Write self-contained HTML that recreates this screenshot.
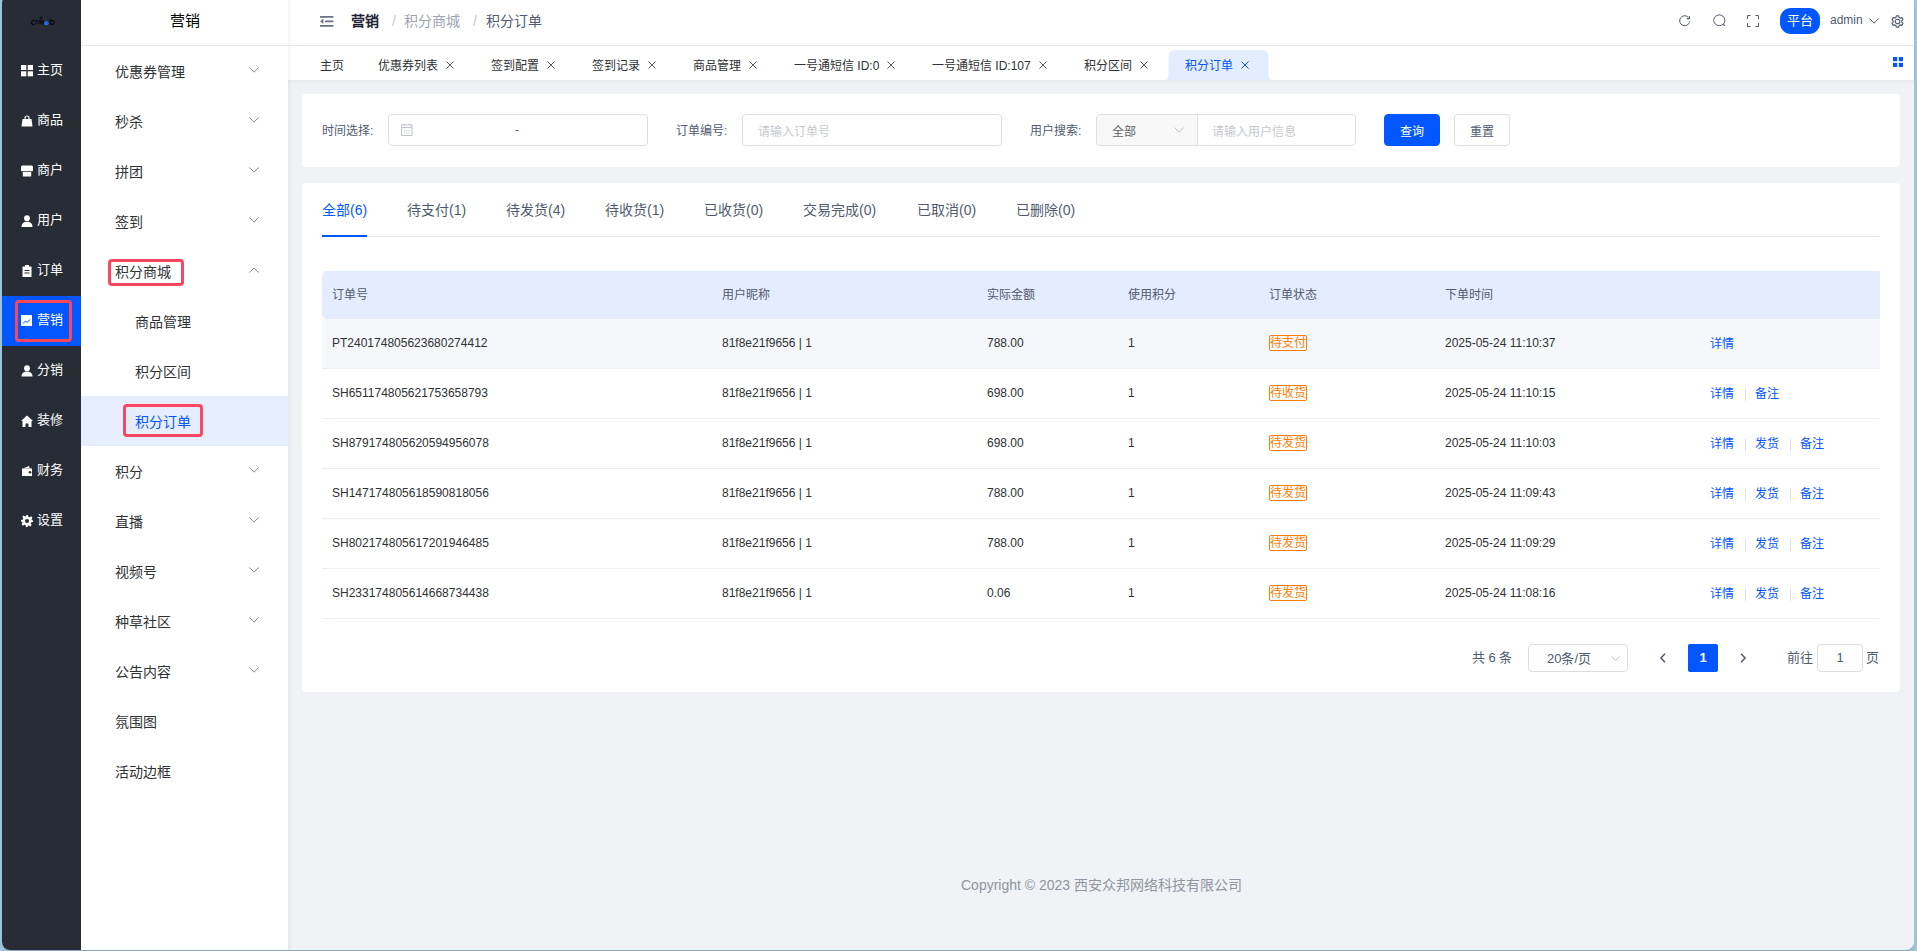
<!DOCTYPE html>
<html lang="zh-CN">
<head>
<meta charset="utf-8">
<title>积分订单</title>
<style>
*{box-sizing:border-box;margin:0;padding:0}
html,body{width:1917px;height:951px;overflow:hidden;background:#a2c4d9;font-family:"Liberation Sans",sans-serif;}
.abs{position:absolute}
.win{position:absolute;left:2px;top:-5px;width:1912px;height:955px;border-radius:8px;overflow:hidden;background:#f0f2f5;box-shadow:0 1px 1px rgba(60,100,130,.3)}
.inner{position:absolute;left:-2px;top:5px;width:1917px;height:950px}
/* left dark bar */
.side{position:absolute;left:2px;top:0;width:79px;height:950px;background:#282c35}
.logo{position:absolute;left:29px;top:15px;font-size:9px;font-weight:bold;color:#0b0b0b;letter-spacing:-0.3px}
.nav{position:absolute;left:0;width:79px;height:50px;color:#fff;font-size:13px;font-weight:500}
.nav.on{background:#0256ff}
.nav svg{position:absolute;left:19px;top:19px;width:12px;height:12px}
.nav span{position:absolute;left:35px;top:15px;line-height:18px;white-space:nowrap}
/* submenu */
.sub{position:absolute;left:81px;top:0;width:207px;height:950px;background:#fff}
.sub .ttl{position:absolute;left:0;top:0;width:207px;height:46px;line-height:42px;text-align:center;font-size:15px;color:#000;font-weight:500;border-bottom:1px solid #e6e9f1}
.mi{position:absolute;left:0;width:207px;height:50px;font-size:14px;color:#303133}
.mi span{position:absolute;left:34px;top:16px;line-height:20px;white-space:nowrap}
.mi.c span{left:54px}
.mi.on{background:#e5edfe;color:#0256ff}
.mi svg{position:absolute;left:168px;top:21px;width:10px;height:6px}
.redbox{position:absolute;border:3px solid #f8475f;border-radius:4px}
/* main */
.main{position:absolute;left:0;top:0;width:1917px;height:950px}
.hdr{position:absolute;left:288px;top:0;width:1626px;height:46px;background:#fff;border-bottom:1px solid #e6e9f1}
.tabs{position:absolute;left:288px;top:46px;width:1626px;height:34px;background:#fff}
.bc{font-size:14px;line-height:20px;white-space:nowrap}
.tb{position:absolute;top:12px;font-size:12px;line-height:17px;color:#303133;white-space:nowrap}
.tx{position:absolute;top:15px;width:8px;height:8px;line-height:0}
.card{position:absolute;left:302px;width:1598px;background:#fff;border-radius:4px}
.lbl{position:absolute;top:29px;font-size:12px;color:#515a6e;line-height:17px;white-space:nowrap}
.inp{position:absolute;top:20px;height:32px;border:1px solid #dcdee2;border-radius:4px;background:#fff}
.ph{position:absolute;left:15px;top:9px;font-size:12px;color:#c5c8ce;line-height:17px;white-space:nowrap}
.btn{position:absolute;top:20px;width:56px;height:32px;border:1px solid #dcdee2;border-radius:4px;background:#fff;font-size:12px;color:#515a6e;line-height:34px;text-align:center}
.stb{position:absolute;top:17px;font-size:14px;line-height:20px;white-space:nowrap}
.th{position:absolute;top:104px;font-size:12px;color:#515a6e;line-height:17px;white-space:nowrap}
.tr{position:absolute;left:20px;width:1558px;height:50px;border-bottom:1px solid #ebeef3}
.td{position:absolute;top:16px;font-size:12px;color:#303133;line-height:17px;white-space:nowrap}
.tag{position:absolute;top:16px;height:16px;border:1px solid #ff7d00;border-radius:2px;color:#ff7d00;font-size:12px;line-height:14px;white-space:nowrap}
.op{position:absolute;top:17px;font-size:12px;color:#0256ff;line-height:17px;white-space:nowrap}
.sep{position:absolute;top:20px;width:1px;height:12px;background:#dcdee2}
.pgt{position:absolute;top:466px;font-size:13px;color:#515a6e;line-height:18px;white-space:nowrap}
.shadowL{position:absolute;left:288px;top:0;width:4px;height:950px;background:linear-gradient(90deg,rgba(0,0,0,.045),rgba(0,0,0,0))}
.shadowT{position:absolute;left:288px;top:80px;width:1626px;height:4px;background:linear-gradient(180deg,rgba(0,0,0,.04),rgba(0,0,0,0))}
</style>
</head>
<body>
<div class="win"><div class="inner">

<!-- dark side bar -->
<div class="side">
  <svg class="abs" style="left:28px;top:16px" width="25.5" height="10" viewBox="0 0 28 11"><g fill="none" stroke="#0d0d0f" stroke-width="1.5"><path d="M5.2 5.6A2.1 2.3 0 1 0 5.2 8.9"/><path d="M6.6 9.2V6.8Q6.6 5 8.4 5"/><path d="M9.6 9.2V5.6h4.8v3.6M12 5.6v3.6"/></g><circle cx="12" cy="2.3" r="1.2" fill="none" stroke="#0d0d0f" stroke-width="1"/><path d="M15.5 7.2a2.5 2.4 0 1 0 4.9 0z" fill="#1f6dff"/><path d="M15.5 7.2a2.5 2.2 0 0 1 4.9 0z" fill="#1f6dff"/><path d="M22.2 3v6.2M22.2 7.1a2 2.1 0 1 0 4 0a2 2.1 0 1 0-4 0" fill="none" stroke="#0d0d0f" stroke-width="1.5"/></svg>
  <div class="nav" style="top:46px"><svg viewBox="0 0 12 12"><rect x="0" y="0" width="5.3" height="5" fill="#fff"/><rect x="6.7" y="0" width="5.3" height="5" fill="#fff"/><rect x="0" y="6.3" width="5.3" height="5" fill="#fff"/><rect x="6.7" y="6.3" width="5.3" height="5" fill="#fff"/></svg><span>主页</span></div>
  <div class="nav" style="top:96px"><svg viewBox="0 0 12 12"><path d="M4 4V3a2 2 0 0 1 4 0v1" stroke="#fff" stroke-width="1.2" fill="none"/><path d="M1.5 4h9l1 7.5H.5z" fill="#fff"/></svg><span>商品</span></div>
  <div class="nav" style="top:146px"><svg viewBox="0 0 12 12"><path d="M1.2 .5h9.6Q12 .5 12 2v3.2Q12 6.2 11 6.2H1Q0 6.2 0 5.2V2Q0 .5 1.2 .5z" fill="#fff"/><path d="M1.8 7h8.4v4.5H1.8z" fill="#fff"/></svg><span>商户</span></div>
  <div class="nav" style="top:196px"><svg viewBox="0 0 12 12"><circle cx="6" cy="3.2" r="2.9" fill="#fff"/><path d="M.5 12c0-3.5 2.3-5.3 5.5-5.3s5.5 1.8 5.5 5.3z" fill="#fff"/></svg><span>用户</span></div>
  <div class="nav" style="top:246px"><svg viewBox="0 0 12 12"><path d="M1.5 1.5h9V12h-9z" fill="#fff"/><rect x="4" y="0" width="4" height="2.5" fill="#fff"/><path d="M3.5 5.5h5M3.5 8h5" stroke="#282c35" stroke-width="1"/></svg><span>订单</span></div>
  <div class="nav on" style="top:296px"><svg viewBox="0 0 12 12"><rect x="0" y="0" width="11" height="11" fill="#fff"/><path d="M2 8.5l2.5-2.5 1.5 1.5L9 4.5" stroke="#0256ff" stroke-width="1" fill="none"/></svg><span>营销</span></div>
  <div class="nav" style="top:346px"><svg viewBox="0 0 12 12"><circle cx="6" cy="3.2" r="2.9" fill="#fff"/><path d="M.5 11.5c0-3.5 2.3-5 5.5-5s5.5 1.5 5.5 5z" fill="#fff"/></svg><span>分销</span></div>
  <div class="nav" style="top:396px"><svg viewBox="0 0 12 12"><path d="M6 .5L12 6h-1.5v6H7.5V8.5h-3V12H1.5V6H0z" fill="#fff"/></svg><span>装修</span></div>
  <div class="nav" style="top:446px"><svg viewBox="0 0 12 12"><path d="M1 3.5h10V11H1z" fill="#fff"/><path d="M2 3.5L8 1l1 2.5" fill="#fff"/><circle cx="9" cy="7.2" r="1.3" fill="#282c35"/></svg><span>财务</span></div>
  <div class="nav" style="top:496px"><svg viewBox="0 0 12 12"><path d="M5 0h2l.3 1.7 1.3.6 1.5-1 1.4 1.4-1 1.5.6 1.3L12 5v2l-1.7.3-.6 1.3 1 1.5-1.4 1.4-1.5-1-1.3.6L7 12H5l-.3-1.7-1.3-.6-1.5 1L.5 9.3l1-1.5-.6-1.3L0 7V5l1.7-.3.6-1.3-1-1.5L2.7.5l1.5 1 1.3-.6z" fill="#fff"/><circle cx="6" cy="6" r="2" fill="#282c35"/></svg><span>设置</span></div>
</div>
<div class="redbox" style="left:15px;top:300px;width:57px;height:42px"></div>

<!-- submenu -->
<div class="sub">
  <div class="ttl">营销</div>
  <div class="mi " style="top:46px"><span>优惠券管理</span><svg viewBox="0 0 10 6"><path d="M.5.5L5 5.2 9.5.5" stroke="#808695" stroke-width="1" fill="none"/></svg></div>
  <div class="mi " style="top:96px"><span>秒杀</span><svg viewBox="0 0 10 6"><path d="M.5.5L5 5.2 9.5.5" stroke="#808695" stroke-width="1" fill="none"/></svg></div>
  <div class="mi " style="top:146px"><span>拼团</span><svg viewBox="0 0 10 6"><path d="M.5.5L5 5.2 9.5.5" stroke="#808695" stroke-width="1" fill="none"/></svg></div>
  <div class="mi " style="top:196px"><span>签到</span><svg viewBox="0 0 10 6"><path d="M.5.5L5 5.2 9.5.5" stroke="#808695" stroke-width="1" fill="none"/></svg></div>
  <div class="mi " style="top:246px"><span>积分商城</span><svg viewBox="0 0 10 6"><path d="M.5 5.5L5 1l4.5 4.5" stroke="#808695" stroke-width="1" fill="none"/></svg></div>
  <div class="mi c" style="top:296px"><span>商品管理</span></div>
  <div class="mi c" style="top:346px"><span>积分区间</span></div>
  <div class="mi c on" style="top:396px"><span>积分订单</span></div>
  <div class="mi " style="top:446px"><span>积分</span><svg viewBox="0 0 10 6"><path d="M.5.5L5 5.2 9.5.5" stroke="#808695" stroke-width="1" fill="none"/></svg></div>
  <div class="mi " style="top:496px"><span>直播</span><svg viewBox="0 0 10 6"><path d="M.5.5L5 5.2 9.5.5" stroke="#808695" stroke-width="1" fill="none"/></svg></div>
  <div class="mi " style="top:546px"><span>视频号</span><svg viewBox="0 0 10 6"><path d="M.5.5L5 5.2 9.5.5" stroke="#808695" stroke-width="1" fill="none"/></svg></div>
  <div class="mi " style="top:596px"><span>种草社区</span><svg viewBox="0 0 10 6"><path d="M.5.5L5 5.2 9.5.5" stroke="#808695" stroke-width="1" fill="none"/></svg></div>
  <div class="mi " style="top:646px"><span>公告内容</span><svg viewBox="0 0 10 6"><path d="M.5.5L5 5.2 9.5.5" stroke="#808695" stroke-width="1" fill="none"/></svg></div>
  <div class="mi " style="top:696px"><span>氛围图</span></div>
  <div class="mi " style="top:746px"><span>活动边框</span></div>
</div>
<div class="redbox" style="left:107.5px;top:259px;width:76px;height:27px"></div>
<div class="redbox" style="left:122.5px;top:404px;width:80px;height:33px"></div>

<!-- main -->
<div class="main">
  <div class="hdr">
    <svg class="abs" style="left:32px;top:16px" width="14" height="11" viewBox="0 0 14 11"><rect x="0" y="0" width="13.5" height="1.8" rx=".5" fill="#687083"/><rect x="5" y="4.4" width="8.5" height="1.8" rx=".5" fill="#687083"/><rect x="0" y="9" width="13.5" height="1.8" rx=".5" fill="#687083"/><path d="M0 5.3l3.4-2.6v5.2z" fill="#687083"/></svg>
    <div class="abs bc" style="left:63px;top:11px;font-weight:bold;color:#1d2433">营销</div>
    <div class="abs bc" style="left:104px;top:11px;color:#c5c8ce">/</div>
    <div class="abs bc" style="left:116px;top:11px;color:#9ea3ae">积分商城</div>
    <div class="abs bc" style="left:185px;top:11px;color:#c5c8ce">/</div>
    <div class="abs bc" style="left:198px;top:11px;color:#515a6e">积分订单</div>
    <!-- right icons -->
    <svg class="abs" style="left:1391px;top:15px" width="13" height="12" viewBox="0 0 13 12"><path d="M10.6 6.6A5 5 0 1 1 9.2 2.2" stroke="#515a6e" stroke-width="1" fill="none"/><path d="M10.4 1v2.6H7.8" stroke="#515a6e" stroke-width="1.1" fill="none"/></svg>
    <svg class="abs" style="left:1425px;top:14px" width="13" height="13" viewBox="0 0 13 13"><ellipse cx="6.3" cy="6.3" rx="5.6" ry="5.4" stroke="#515a6e" stroke-width="1" fill="none"/><path d="M10.2 10.2l1.6 1.8" stroke="#515a6e" stroke-width="1.1"/></svg>
    <svg class="abs" style="left:1459px;top:15px" width="12" height="12" viewBox="0 0 12 12"><path d="M.5 4V.5h3M8.5.5h3V4M11.5 8v3.5h-3M3.5 11.5h-3V8" stroke="#515a6e" stroke-width="1" fill="none"/></svg>
    <div class="abs" style="left:1492px;top:8px;width:40px;height:26px;border-radius:11px;background:#0256ff;color:#fff;font-size:13px;line-height:26px;text-align:center">平台</div>
    <div class="abs" style="left:1542px;top:12px;font-size:12px;color:#515a6e;line-height:17px">admin</div>
    <svg class="abs" style="left:1581px;top:18px" width="10" height="6" viewBox="0 0 10 6"><path d="M.5.5L5 5.2 9.5.5" stroke="#515a6e" stroke-width="1" fill="none"/></svg>
    <svg class="abs" style="left:1602.5px;top:14.5px" width="13" height="13" viewBox="0 0 24 24"><path d="M9.8 1.5h4.4l.7 3 2.1 1.2 2.9-.9 2.2 3.8-2.2 2.1v2.6l2.2 2.1-2.2 3.8-2.9-.9-2.1 1.2-.7 3H9.8l-.7-3-2.1-1.2-2.9.9-2.2-3.8 2.2-2.1v-2.6L1.9 8.6l2.2-3.8 2.9.9 2.1-1.2z" stroke="#515a6e" stroke-width="2.1" fill="none" stroke-linejoin="round"/><circle cx="12" cy="12" r="4.2" stroke="#515a6e" stroke-width="2.1" fill="none"/></svg>
  </div>
  <div class="tabs">
    <div class="tb" style="left:32px">主页</div>
    <div class="tb" style="left:90px">优惠券列表</div>
    <div class="tx" style="left:158px"><svg width="8" height="8" viewBox="0 0 8 8"><path d="M.5.5l7 7M7.5.5l-7 7" stroke="#515a6e" stroke-width="1"/></svg></div>
    <div class="tb" style="left:203px">签到配置</div>
    <div class="tx" style="left:259px"><svg width="8" height="8" viewBox="0 0 8 8"><path d="M.5.5l7 7M7.5.5l-7 7" stroke="#515a6e" stroke-width="1"/></svg></div>
    <div class="tb" style="left:304px">签到记录</div>
    <div class="tx" style="left:360px"><svg width="8" height="8" viewBox="0 0 8 8"><path d="M.5.5l7 7M7.5.5l-7 7" stroke="#515a6e" stroke-width="1"/></svg></div>
    <div class="tb" style="left:405px">商品管理</div>
    <div class="tx" style="left:461px"><svg width="8" height="8" viewBox="0 0 8 8"><path d="M.5.5l7 7M7.5.5l-7 7" stroke="#515a6e" stroke-width="1"/></svg></div>
    <div class="tb" style="left:506px">一号通短信 ID:0</div>
    <div class="tx" style="left:599px"><svg width="8" height="8" viewBox="0 0 8 8"><path d="M.5.5l7 7M7.5.5l-7 7" stroke="#515a6e" stroke-width="1"/></svg></div>
    <div class="tb" style="left:644px">一号通短信 ID:107</div>
    <div class="tx" style="left:751px"><svg width="8" height="8" viewBox="0 0 8 8"><path d="M.5.5l7 7M7.5.5l-7 7" stroke="#515a6e" stroke-width="1"/></svg></div>
    <div class="tb" style="left:796px">积分区间</div>
    <div class="tx" style="left:852px"><svg width="8" height="8" viewBox="0 0 8 8"><path d="M.5.5l7 7M7.5.5l-7 7" stroke="#515a6e" stroke-width="1"/></svg></div>
    <svg class="abs" style="left:876px;top:4px" width="109" height="30" viewBox="0 0 109 30"><path d="M0 30Q4.5 30 4.5 25V7Q4.5 0 11.5 0H97.5Q104.5 0 104.5 7V25Q104.5 30 109 30Z" fill="#e4edfd"/></svg>
    <div class="tb" style="left:897px;color:#0256ff">积分订单</div>
    <div class="tx" style="left:953px"><svg width="8" height="8" viewBox="0 0 8 8"><path d="M.5.5l7 7M7.5.5l-7 7" stroke="#0256ff" stroke-width="1"/></svg></div>
    <svg class="abs" style="left:1605px;top:11px" width="10" height="10" viewBox="0 0 10 10"><rect x="0" y="0" width="4.2" height="4.2" fill="#0256ff"/><rect x="5.8" y="0" width="4.2" height="4.2" fill="#0256ff"/><rect x="0" y="5.8" width="4.2" height="4.2" fill="#0256ff"/><rect x="5.8" y="5.8" width="4.2" height="4.2" fill="#0256ff"/></svg>
  </div>
  <div class="card" style="top:94px;height:73px">
    <div class="lbl" style="left:20px">时间选择:</div>
    <div class="inp" style="left:86px;width:260px"><div class="abs" style="left:11px;top:8px;line-height:0"><svg width="14" height="14" viewBox="0 0 14 14"><path d="M1.5 1.8h10.5v10.7H1.5z" stroke="#c0c4cc" fill="none"/><path d="M1.5 4.5h10.5" stroke="#c0c4cc" stroke-width="1.1"/><path d="M4 .6v2.2M10 .6v2.2" stroke="#c0c4cc"/><path d="M3.8 7.5h1.2M6.2 7.5h1.2M8.6 7.5h1.2M3.8 9.8h1.2M6.2 9.8h1.2M8.6 9.8h1.2" stroke="#c5c8d0" stroke-width=".9"/></svg></div><div class="abs" style="left:126px;top:6px;font-size:12px;color:#515a6e;line-height:18px">-</div></div>
    <div class="lbl" style="left:374px">订单编号:</div>
    <div class="inp" style="left:440px;width:260px"><span class="ph">请输入订单号</span></div>
    <div class="lbl" style="left:728px">用户搜索:</div>
    <div class="inp" style="left:794px;width:260px"><div class="abs" style="left:0;top:0;width:101px;height:30px;background:#f8f8f9;border-right:1px solid #dcdee2;border-radius:4px 0 0 4px"><span class="abs" style="left:15px;top:9px;font-size:12px;color:#606266;line-height:17px">全部</span><div class="abs" style="left:77px;top:12px;line-height:0"><svg width="10" height="6" viewBox="0 0 10 6"><path d="M.5.5L5 5.2 9.5.5" stroke="#c0c4cc" stroke-width="1" fill="none"/></svg></div></div><span class="ph" style="left:115px">请输入用户信息</span></div>
    <div class="btn" style="left:1082px;background:#0256ff;border-color:#0256ff;color:#fff">查询</div>
    <div class="btn" style="left:1152px">重置</div>
  </div>
  <div class="card" style="top:183px;height:509px">
    <div class="stb" style="left:20px;color:#0256ff">全部(6)</div>
    <div class="stb" style="left:105px;color:#515a6e">待支付(1)</div>
    <div class="stb" style="left:204px;color:#515a6e">待发货(4)</div>
    <div class="stb" style="left:303px;color:#515a6e">待收货(1)</div>
    <div class="stb" style="left:402px;color:#515a6e">已收货(0)</div>
    <div class="stb" style="left:501px;color:#515a6e">交易完成(0)</div>
    <div class="stb" style="left:615px;color:#515a6e">已取消(0)</div>
    <div class="stb" style="left:714px;color:#515a6e">已删除(0)</div>
    <div class="abs" style="left:20px;top:53px;width:1558px;height:1px;background:#e4e7ed"></div>
    <div class="abs" style="left:20px;top:52px;width:45px;height:2px;background:#0256ff"></div>
    <div class="abs" style="left:20px;top:88px;width:1558px;height:48px;background:#e4edfd;border-radius:5px 0 0 5px"></div>
    <div class="th" style="left:30px">订单号</div>
    <div class="th" style="left:420px">用户昵称</div>
    <div class="th" style="left:685px">实际金额</div>
    <div class="th" style="left:826px">使用积分</div>
    <div class="th" style="left:967px">订单状态</div>
    <div class="th" style="left:1143px">下单时间</div>
    <div class="tr" style="top:136px;background:#f5f7fa">
      <div class="td" style="left:10px">PT240174805623680274412</div>
      <div class="td" style="left:400px">81f8e21f9656 | 1</div>
      <div class="td" style="left:665px">788.00</div>
      <div class="td" style="left:806px">1</div>
      <div class="tag" style="left:947px">待支付</div>
      <div class="td" style="left:1123px">2025-05-24 11:10:37</div>
      <div class="op" style="left:1388px">详情</div>
    </div>
    <div class="tr" style="top:186px;background:#fff">
      <div class="td" style="left:10px">SH651174805621753658793</div>
      <div class="td" style="left:400px">81f8e21f9656 | 1</div>
      <div class="td" style="left:665px">698.00</div>
      <div class="td" style="left:806px">1</div>
      <div class="tag" style="left:947px">待收货</div>
      <div class="td" style="left:1123px">2025-05-24 11:10:15</div>
      <div class="op" style="left:1388px">详情</div>
      <div class="sep" style="left:1423px"></div>
      <div class="op" style="left:1433px">备注</div>
    </div>
    <div class="tr" style="top:236px;background:#fff">
      <div class="td" style="left:10px">SH879174805620594956078</div>
      <div class="td" style="left:400px">81f8e21f9656 | 1</div>
      <div class="td" style="left:665px">698.00</div>
      <div class="td" style="left:806px">1</div>
      <div class="tag" style="left:947px">待发货</div>
      <div class="td" style="left:1123px">2025-05-24 11:10:03</div>
      <div class="op" style="left:1388px">详情</div>
      <div class="sep" style="left:1423px"></div>
      <div class="op" style="left:1433px">发货</div>
      <div class="sep" style="left:1468px"></div>
      <div class="op" style="left:1478px">备注</div>
    </div>
    <div class="tr" style="top:286px;background:#fff">
      <div class="td" style="left:10px">SH147174805618590818056</div>
      <div class="td" style="left:400px">81f8e21f9656 | 1</div>
      <div class="td" style="left:665px">788.00</div>
      <div class="td" style="left:806px">1</div>
      <div class="tag" style="left:947px">待发货</div>
      <div class="td" style="left:1123px">2025-05-24 11:09:43</div>
      <div class="op" style="left:1388px">详情</div>
      <div class="sep" style="left:1423px"></div>
      <div class="op" style="left:1433px">发货</div>
      <div class="sep" style="left:1468px"></div>
      <div class="op" style="left:1478px">备注</div>
    </div>
    <div class="tr" style="top:336px;background:#fff">
      <div class="td" style="left:10px">SH802174805617201946485</div>
      <div class="td" style="left:400px">81f8e21f9656 | 1</div>
      <div class="td" style="left:665px">788.00</div>
      <div class="td" style="left:806px">1</div>
      <div class="tag" style="left:947px">待发货</div>
      <div class="td" style="left:1123px">2025-05-24 11:09:29</div>
      <div class="op" style="left:1388px">详情</div>
      <div class="sep" style="left:1423px"></div>
      <div class="op" style="left:1433px">发货</div>
      <div class="sep" style="left:1468px"></div>
      <div class="op" style="left:1478px">备注</div>
    </div>
    <div class="tr" style="top:386px;background:#fff">
      <div class="td" style="left:10px">SH233174805614668734438</div>
      <div class="td" style="left:400px">81f8e21f9656 | 1</div>
      <div class="td" style="left:665px">0.06</div>
      <div class="td" style="left:806px">1</div>
      <div class="tag" style="left:947px">待发货</div>
      <div class="td" style="left:1123px">2025-05-24 11:08:16</div>
      <div class="op" style="left:1388px">详情</div>
      <div class="sep" style="left:1423px"></div>
      <div class="op" style="left:1433px">发货</div>
      <div class="sep" style="left:1468px"></div>
      <div class="op" style="left:1478px">备注</div>
    </div>
    <div class="pgt" style="left:1170px">共 6 条</div>
    <div class="abs" style="left:1226px;top:461px;width:100px;height:28px;border:1px solid #dcdee2;border-radius:4px"><span class="abs" style="left:18px;top:5px;font-size:13px;color:#515a6e;line-height:18px;white-space:nowrap">20条/页</span><div class="abs" style="left:82px;top:11px;line-height:0"><svg width="9" height="5" viewBox="0 0 9 5"><path d="M.5.5L4.5 4.5 8.5.5" stroke="#c0c4cc" stroke-width="1" fill="none"/></svg></div></div>
    <svg class="abs" style="left:1357px;top:470px" width="8" height="10" viewBox="0 0 8 10"><path d="M6 .7L1.9 5 6 9.3" stroke="#515a6e" stroke-width="1.5" fill="none"/></svg>
    <div class="abs" style="left:1386px;top:461px;width:30px;height:28px;border-radius:2px;background:#0256ff;color:#fff;font-size:13px;font-weight:bold;line-height:28px;text-align:center">1</div>
    <svg class="abs" style="left:1437px;top:470px" width="8" height="10" viewBox="0 0 8 10"><path d="M2 .7L6.1 5 2 9.3" stroke="#515a6e" stroke-width="1.5" fill="none"/></svg>
    <div class="pgt" style="left:1485px">前往</div>
    <div class="abs" style="left:1515px;top:461px;width:46px;height:28px;border:1px solid #dcdee2;border-radius:4px;font-size:13px;color:#515a6e;line-height:26px;text-align:center">1</div>
    <div class="pgt" style="left:1564px">页</div>
  </div>
  <div class="shadowT"></div>
  <div class="shadowL"></div>
  <div class="abs" style="left:961px;top:875px;font-size:14px;color:#8f95a1;line-height:20px;white-space:nowrap">Copyright © 2023 西安众邦网络科技有限公司</div>
</div>

</div></div>
</body>
</html>
